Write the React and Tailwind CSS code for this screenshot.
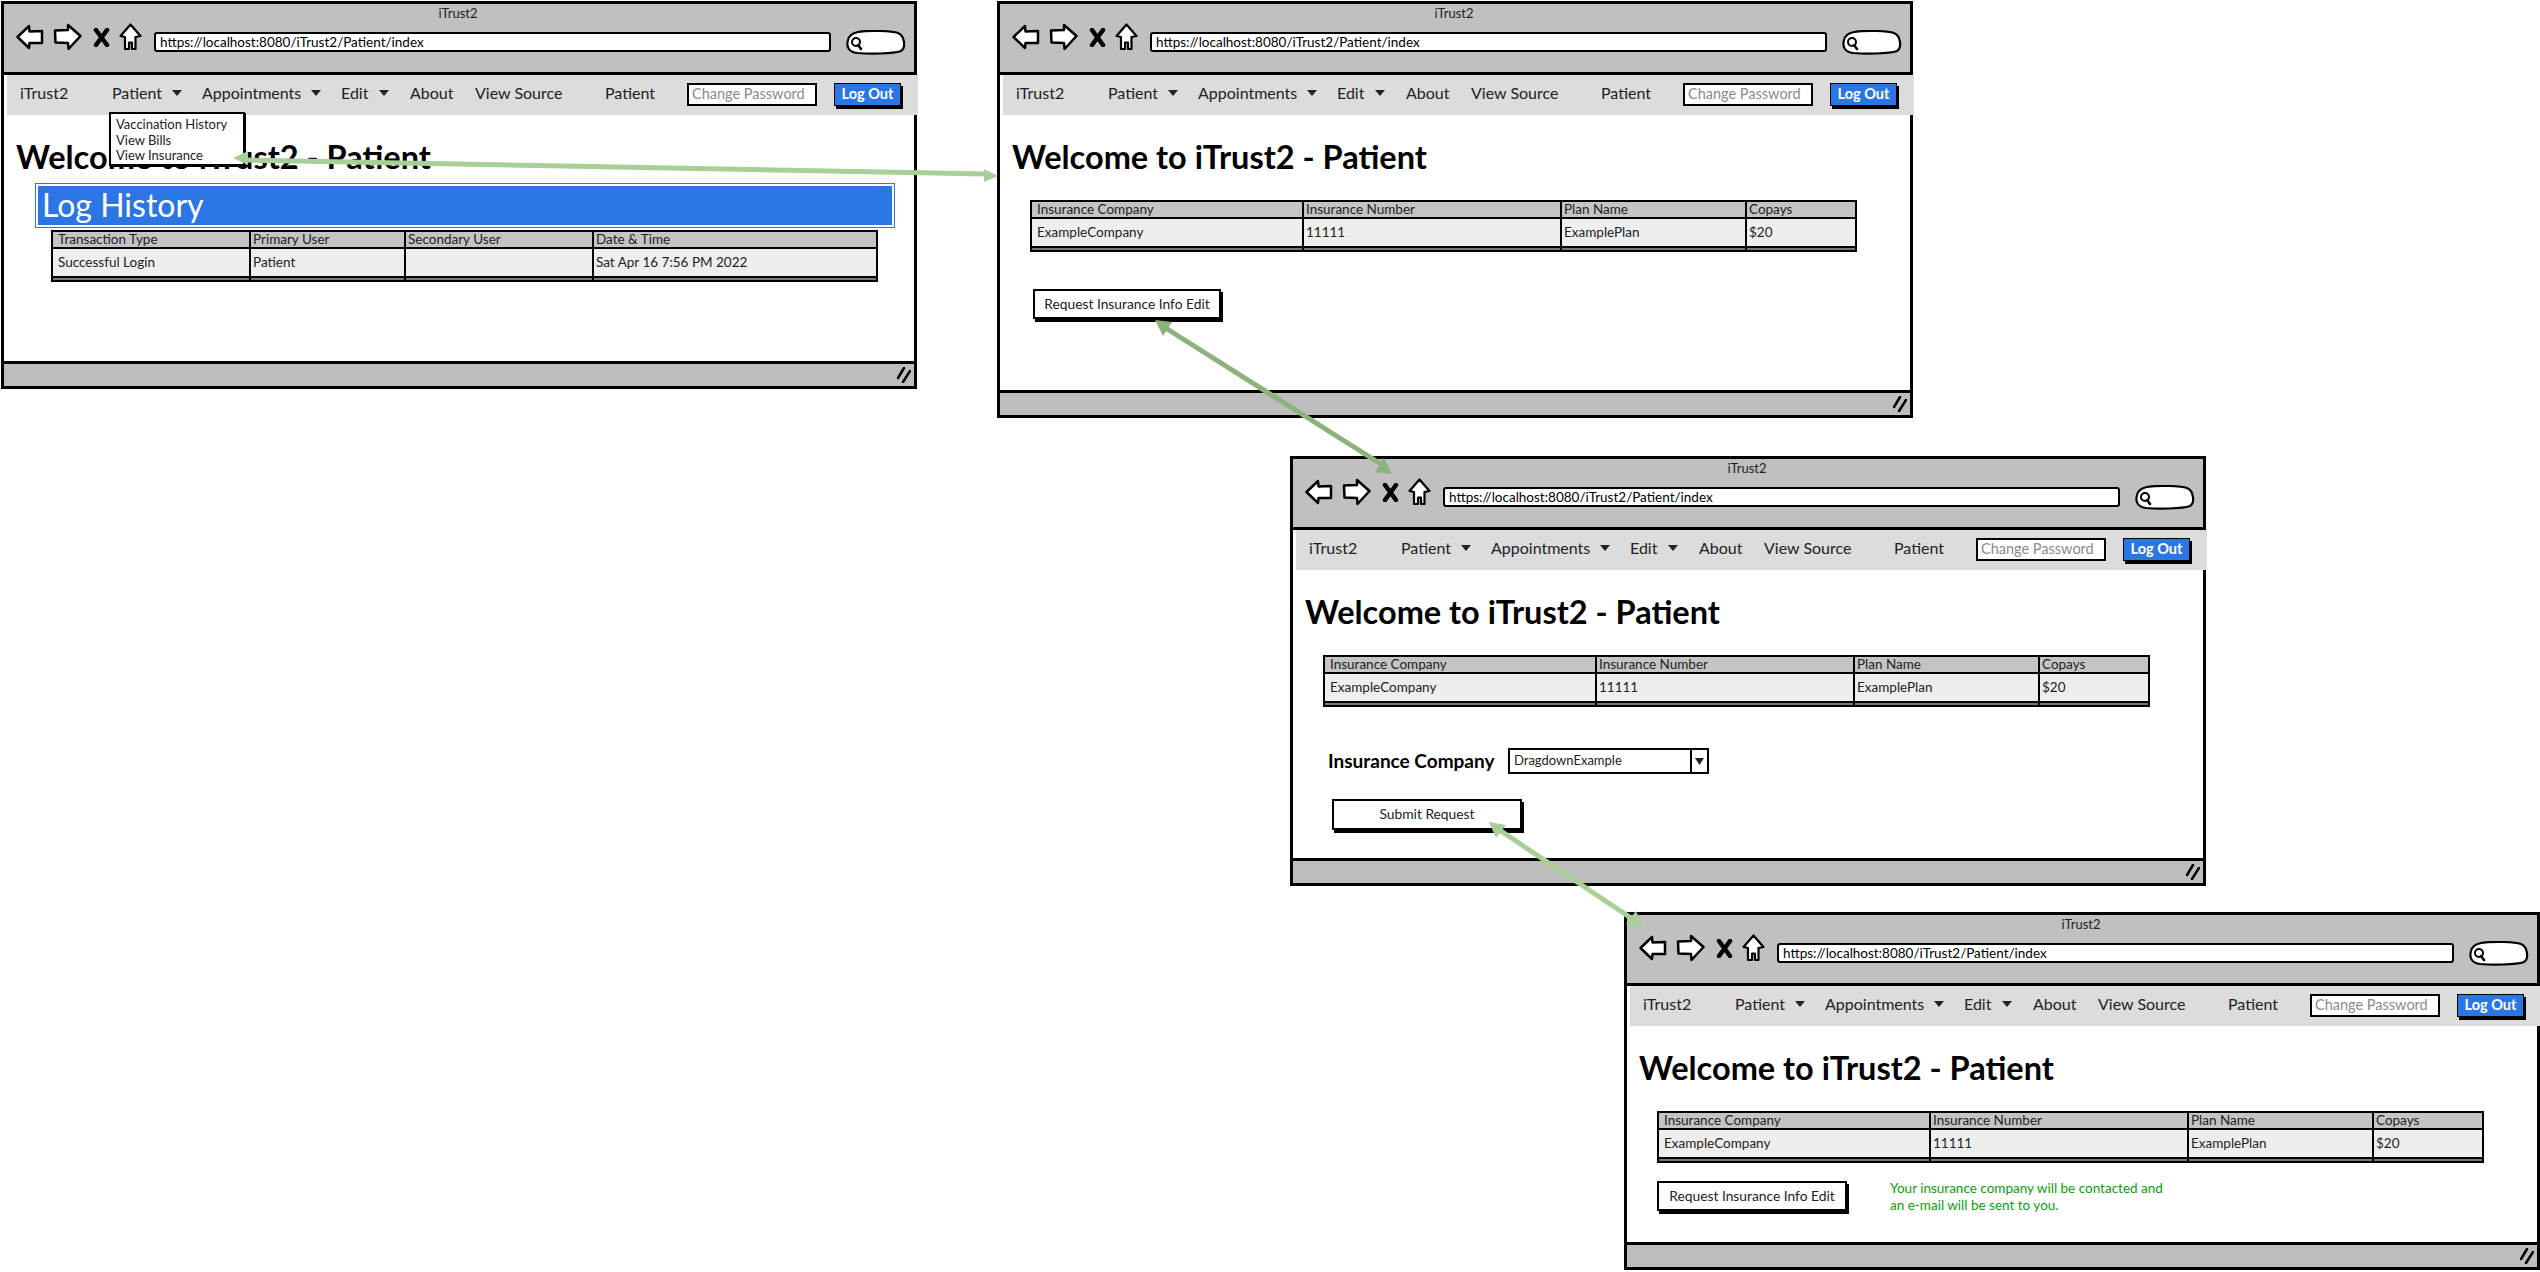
import React from 'react';

const FONT = "font-['Lato','Noto_Sans',sans-serif]";

function BackIcon() {
  return (
    <svg width="28" height="26" viewBox="0 0 28 26" className="shrink-0">
      <path d="M1.5 13 L13 2 L13.5 7.5 L26 7 L26 19 L13.5 19 L13 24 Z" fill="#fff" stroke="#000" strokeWidth="2.5" strokeLinejoin="round" />
    </svg>
  );
}

function ForwardIcon() {
  return (
    <svg width="29" height="28" viewBox="0 0 29 28" className="shrink-0">
      <path d="M27.5 13 L15 2 L15 7 L2 7.5 L2.5 19.5 L15 20 L15.5 26 Z" fill="#fff" stroke="#000" strokeWidth="2.5" strokeLinejoin="round" />
    </svg>
  );
}

function StopIcon() {
  return (
    <svg width="17" height="19" viewBox="0 0 17 19" className="shrink-0">
      <path d="M3 2 L14 17 M14 2 L3 17" fill="none" stroke="#000" strokeWidth="4.5" strokeLinecap="round" />
    </svg>
  );
}

function HomeIcon() {
  return (
    <svg width="23" height="28" viewBox="0 0 23 28" className="shrink-0">
      <path d="M11.5 1.5 L21.5 13 L16.5 14 L16.5 26 L13 26 L13 19.5 L10 19.5 L10 26 L6 26 L6 14 L1.5 13 Z" fill="#fff" stroke="#000" strokeWidth="2.2" strokeLinejoin="round" />
    </svg>
  );
}

function SearchPill() {
  return (
    <svg width="60" height="25" viewBox="0 0 60 25" className="shrink-0">
      <path d="M12 2 C24 0 46 1 52 3 C59 6 60 18 55 21 C47 24 22 24 11 23 C3 22 0 17 2 10 C3 6 7 3 12 2 Z" fill="#fff" stroke="#000" strokeWidth="2.2" />
      <circle cx="10" cy="12" r="4" fill="#fff" stroke="#000" strokeWidth="2" />
      <path d="M12 15 L15 19" stroke="#000" strokeWidth="2.5" strokeLinecap="round" />
    </svg>
  );
}

function Caret() {
  return (
    <svg width="10" height="6" viewBox="0 0 10 6" className="shrink-0">
      <path d="M0 0 H10 L5 6 Z" fill="#222" />
    </svg>
  );
}

function NavBar() {
  return (
    <div className="flex h-[40px] items-center pb-[5px] bg-[#dcdcdc] ml-[3px] -mr-[4px] text-[#222] text-[16px]">
      <span className="ml-[13px] w-[92px]">iTrust2</span>
      <span className="w-[60px]">Patient</span>
      <Caret />
      <span className="ml-[20px] w-[109px]">Appointments</span>
      <Caret />
      <span className="ml-[20px] w-[38px]">Edit</span>
      <Caret />
      <span className="ml-[21px] w-[65px]">About</span>
      <span className="w-[130px] whitespace-nowrap">View Source</span>
      <span className="w-[82px]">Patient</span>
      <div className="mt-[3px] flex items-center w-[130px] h-[23px] bg-white border-2 border-black px-[3px] text-[14.5px] text-[#8a8a8a] whitespace-nowrap">
        Change Password
      </div>
      <div className="mt-[3px] ml-[17px] flex items-center justify-center w-[67px] h-[23px] bg-[#2b76e5] border border-black shadow-[2px_3px_0_#000] text-white text-[14.5px] font-bold">
        Log Out
      </div>
    </div>
  );
}

function Window({ pos, children, menu }) {
  return (
    <div className={`absolute ${pos} w-[916px] flex flex-col bg-white border-[3px] border-black`}>
      <div className="h-[71px] shrink-0 bg-[#c0c0c0] border-b-[3px] border-black">
        <div className="h-5 flex items-center justify-center text-[13px] text-[#222] -translate-x-[1px]">iTrust2</div>
        <div className="flex items-center h-[36px]">
          <div className="ml-[12px] mb-[10px]"><BackIcon /></div>
          <div className="ml-[9px] mb-[10px]"><ForwardIcon /></div>
          <div className="ml-[11px] mb-[10px]"><StopIcon /></div>
          <div className="ml-[9px] mb-[10px]"><HomeIcon /></div>
          <div className="ml-[12px] flex items-center w-[677px] h-[20px] bg-white border-2 border-black rounded-[3px] px-[4px] text-[13.5px] text-black">
            https://localhost:8080/iTrust2/Patient/index
          </div>
          <div className="ml-[15px]"><SearchPill /></div>
        </div>
      </div>
      <NavBar />
      {menu}
      <div className="flex-1 flex flex-col pt-[23px]">
        <h1 className="ml-[12px] h-[38px] flex items-center text-[32.5px] font-bold text-black whitespace-nowrap">Welcome to iTrust2 - Patient</h1>
        {children}
      </div>
      <div className="h-[25px] shrink-0 flex items-center justify-end pr-[3px] bg-[#bdbdbd] border-t-[3px] border-black">
        <svg width="14" height="16" viewBox="0 0 14 16">
          <path d="M7 1 L1 11 M13 4 L6 15" stroke="#000" strokeWidth="2.5" strokeLinecap="round" />
        </svg>
      </div>
    </div>
  );
}

function DataTable({ cols, headers, cells, className }) {
  return (
    <div className={`w-[827px] border-2 border-black text-[13.5px] leading-none text-[#222] ${className}`}>
      <div className={`grid ${cols} h-[17px] bg-[#c4c4c4] border-b-2 border-black`}>
        {headers.map((h, i) => (
          <div key={h} className={`flex items-center whitespace-nowrap ${i === 0 ? 'pl-[5px]' : 'pl-[2px] border-l-2 border-black'}`}>{h}</div>
        ))}
      </div>
      <div className={`grid ${cols} h-[29px] bg-[#eeeeee] border-b-2 border-black`}>
        {cells.map((c, i) => (
          <div key={i} className={`flex items-center whitespace-nowrap ${i === 0 ? 'pl-[5px]' : 'pl-[2px] border-l-2 border-black'}`}>{c}</div>
        ))}
      </div>
      <div className={`grid ${cols} h-[2px] bg-[#777]`}>
        {cells.map((c, i) => (
          <div key={i} className={i === 0 ? '' : 'border-l-2 border-black'} />
        ))}
      </div>
    </div>
  );
}

function Button({ label, className }) {
  return (
    <div className={`flex items-center justify-center bg-white border-2 border-black shadow-[2px_3px_0_#000] text-[13.8px] text-[#222] whitespace-nowrap ${className}`}>
      {label}
    </div>
  );
}

const insuranceCols = 'grid-cols-[270px_258px_185px_110px]';
const insuranceHeaders = ['Insurance Company', 'Insurance Number', 'Plan Name', 'Copays'];
const insuranceCells = ['ExampleCompany', '11111', 'ExamplePlan', '$20'];

function InsuranceTable({ className }) {
  return <DataTable cols={insuranceCols} headers={insuranceHeaders} cells={insuranceCells} className={className} />;
}

export default function App() {
  return (
    <div className={`relative w-[2540px] h-[1272px] overflow-hidden bg-white ${FONT}`}>
      <Window
        pos="left-px top-px h-[388px]"
        menu={
          <div className="absolute z-10 left-[105px] top-[108px] w-[136px] h-[54px] bg-white border-2 border-black shadow-[1px_1px_0_#000] pl-[5px] pt-[3px] text-[13px] leading-[15.5px] text-[#222]">
            <div>Vaccination History</div>
            <div>View Bills</div>
            <div>View Insurance</div>
          </div>
        }
      >
        <div className="ml-[31px] mt-[7px] w-[860px] h-[45px] p-[2px] bg-white border border-[#2b76e5]">
          <div className="h-full flex items-center pl-[4px] pb-[2px] bg-[#2b76e5] text-white text-[32px]">Log History</div>
        </div>
        <DataTable
          className="ml-[47px] mt-[2px]"
          cols="grid-cols-[196px_155px_188px_284px]"
          headers={['Transaction Type', 'Primary User', 'Secondary User', 'Date & Time']}
          cells={['Successful Login', 'Patient', '', 'Sat Apr 16 7:56 PM 2022']}
        />
      </Window>

      <Window pos="left-[997px] top-px h-[417px]">
        <InsuranceTable className="ml-[30px] mt-[24px]" />
        <Button label="Request Insurance Info Edit" className="ml-[33px] mt-[37px] w-[188px] h-[30px]" />
      </Window>

      <Window pos="left-[1290px] top-[456px] h-[430px]">
        <InsuranceTable className="ml-[30px] mt-[24px]" />
        <div className="flex items-center mt-[41px] h-[26px] ml-[35px]">
          <span className="w-[180px] text-[19px] font-bold text-black whitespace-nowrap">Insurance Company</span>
          <div className="flex w-[201px] h-[26px] bg-white border-2 border-black text-[13px] text-[#222]">
            <span className="flex-1 flex items-center pl-[4px]">DragdownExample</span>
            <span className="w-[17px] flex items-center justify-center border-l-2 border-black">
              <svg width="9" height="7" viewBox="0 0 9 7"><path d="M0 0 H9 L4.5 7 Z" fill="#222" /></svg>
            </span>
          </div>
        </div>
        <Button label="Submit Request" className="ml-[39px] mt-[25px] w-[190px] h-[31px]" />
      </Window>

      <Window pos="left-[1624px] top-[912px] h-[358px]">
        <InsuranceTable className="ml-[30px] mt-[24px]" />
        <div className="flex items-start mt-[18px] ml-[30px]">
          <Button label="Request Insurance Info Edit" className="w-[190px] h-[30px]" />
          <p className="ml-[43px] -mt-[1px] w-[290px] text-[13.5px] leading-[17px] text-[#0b9e0b]">
            Your insurance company will be contacted and an e-mail will be sent to you.
          </p>
        </div>
      </Window>

      <svg className="absolute inset-0 z-20 pointer-events-none" width="2540" height="1272" viewBox="0 0 2540 1272">
        <path d="M245 160 L986 174" stroke="#a9cf98" strokeWidth="5" />
        <path d="M233 158 L248 151 L248 165 Z" fill="#a9cf98" />
        <path d="M998 176 L984 169 L984 182 Z" fill="#a9cf98" />
        <path d="M1164 327 L1384 466" stroke="#8db27e" strokeWidth="5" />
        <path d="M1155 320 L1172 322 L1163 336 Z" fill="#8db27e" />
        <path d="M1392 474 L1375 472 L1384 458 Z" fill="#8db27e" />
        <path d="M1498 829 L1634 920" stroke="#a9cf98" strokeWidth="5" />
        <path d="M1489 822 L1506 825 L1496 838 Z" fill="#a9cf98" />
        <path d="M1643 927 L1626 924 L1636 911 Z" fill="#a9cf98" />
      </svg>
    </div>
  );
}
